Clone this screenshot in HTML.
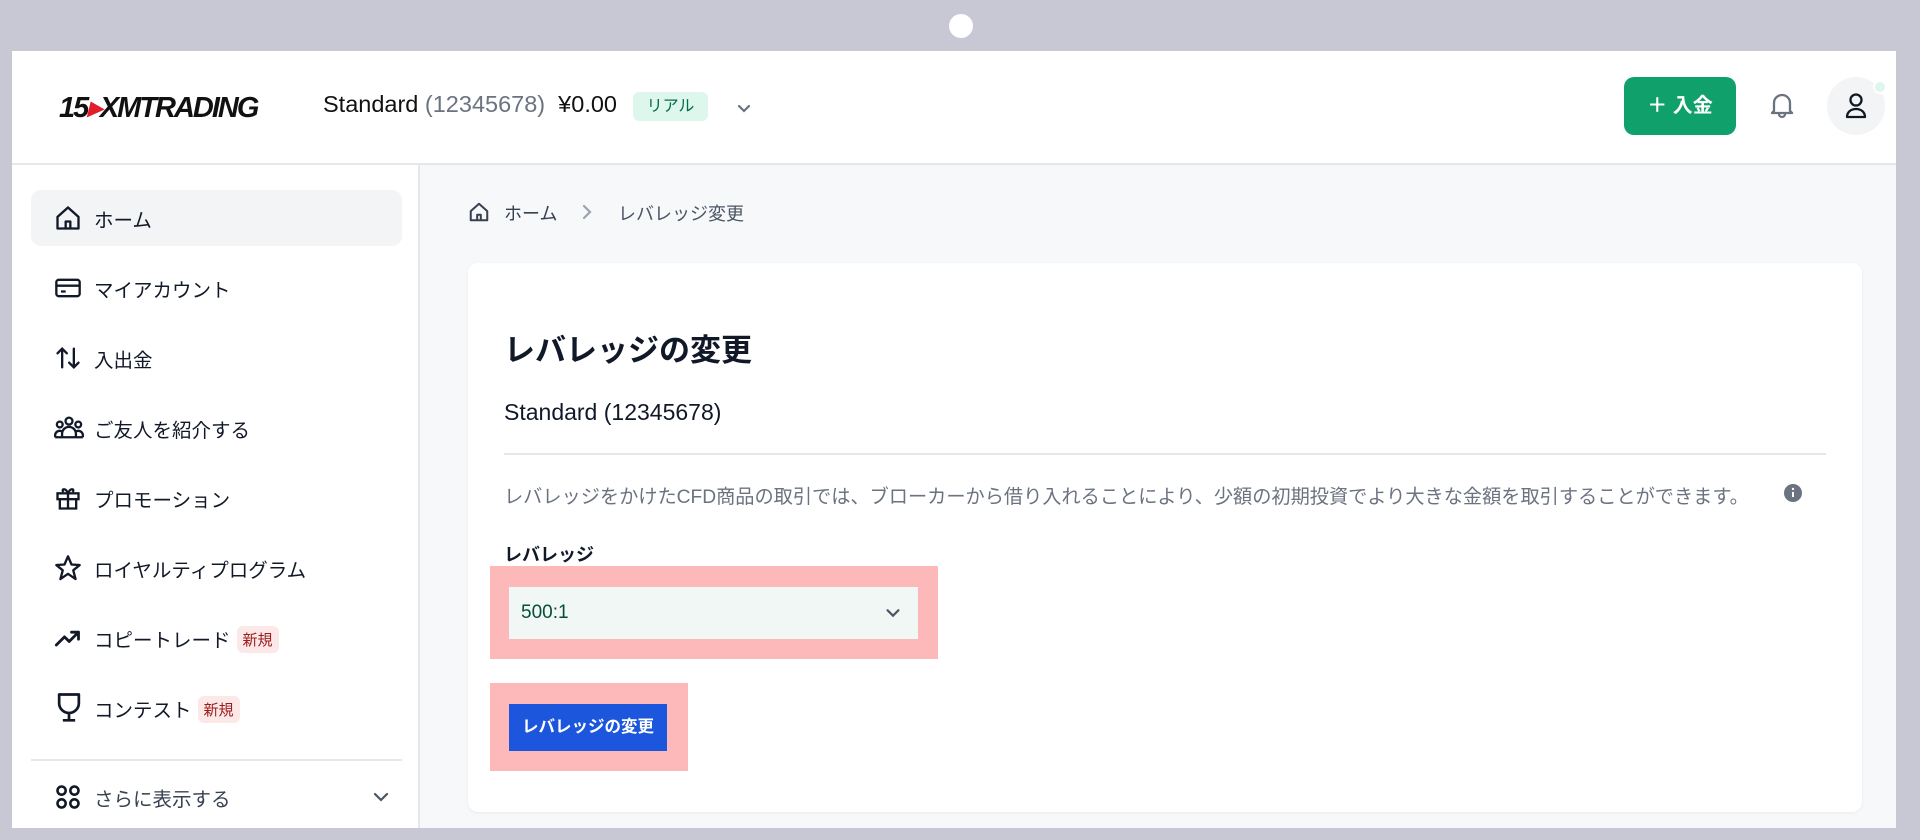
<!DOCTYPE html>
<html><head><meta charset="utf-8">
<style>
*{box-sizing:border-box;margin:0;padding:0}
body{width:1920px;height:840px;background:#c8c8d4;font-family:"Liberation Sans","Noto Sans CJK JP",sans-serif;position:relative;overflow:hidden;color:#111827}
.dot{position:absolute;left:949px;top:14px;width:24px;height:24px;border-radius:50%;background:#fff}
.screen{position:absolute;left:12px;top:51px;width:1884px;height:777px;background:#f7f8fa;overflow:hidden}
.header{position:absolute;left:0;top:0;width:1884px;height:114px;background:#fff;border-bottom:2px solid #e5e7eb}
.side{position:absolute;left:0;top:114px;width:408px;height:663px;background:#fff;border-right:2px solid #e5e7eb}
.item{position:absolute;left:19px;width:371px;height:56px;display:flex;align-items:center;font-size:19.5px;color:#111827}
.item svg{position:absolute;left:23px;top:50%;transform:translateY(-50%)}
.item span.t{position:absolute;left:63px}
.new{display:inline-block;background:#fde8e8;color:#9b1c1c;font-size:15px;padding:3px 6px;border-radius:6px;margin-left:6px;vertical-align:2px}
.card{position:absolute;left:456px;top:212px;width:1394px;height:549px;background:#fff;border-radius:10px;box-shadow:0 1px 3px rgba(0,0,0,.06)}
</style></head><body>
<div class="dot"></div>
<div class="screen">
 <div class="header">
  <div style="position:absolute;left:47px;top:39px;font-weight:bold;font-style:italic;font-size:29px;letter-spacing:-2px;color:#111">15<span style="color:#e11d2a">▸</span>XMTRADING</div>
  <div style="position:absolute;left:311px;top:40px;font-size:23.5px;color:#111">Standard <span style="color:#6b7280">(12345678)</span>&nbsp; ¥0.00</div>
  <div style="position:absolute;left:621px;top:41px;width:75px;height:29px;background:#def7ec;border-radius:6px;color:#046c4e;font-size:16px;text-align:center;line-height:29px">リアル</div>
  <svg style="position:absolute;left:722px;top:47px" width="20" height="20" viewBox="0 0 20 20"><path d="M5 8l5 5 5-5" fill="none" stroke="#6b7280" stroke-width="2.2" stroke-linecap="round"/></svg>
  <div style="position:absolute;left:1612px;top:26px;width:112px;height:58px;background:#10a06c;border-radius:10px;color:#fff;font-size:20px;font-weight:bold;text-align:center;line-height:58px">＋ 入金</div>
  <svg style="position:absolute;left:1756px;top:38px" width="28" height="32" viewBox="0 0 28 32"><path d="M6 22V14a8 8 0 0116 0v8l2 2H4z M11 25a3 3 0 006 0" fill="none" stroke="#6b7280" stroke-width="2.3" stroke-linejoin="round"/></svg>
  <div style="position:absolute;left:1815px;top:26px;width:58px;height:58px;background:#f3f4f6;border-radius:50%"></div>
  <div style="position:absolute;left:1861px;top:29px;width:14px;height:14px;background:#def7ec;border-radius:50%;border:2px solid #fff"></div>
  <svg style="position:absolute;left:1830px;top:40px" width="28" height="30" viewBox="0 0 28 30"><circle cx="14" cy="9" r="5.5" fill="none" stroke="#111827" stroke-width="2.3"/><path d="M5 26c0-5 4-8 9-8s9 3 9 8z" fill="none" stroke="#111827" stroke-width="2.3" stroke-linejoin="round"/></svg>
 </div>
 <div class="side">
  <div class="item" style="top:25px;background:#f3f4f6;border-radius:10px"><svg width="28" height="28" viewBox="0 0 24 24"><path d="M3 11l9-8 9 8v10H3z M10 21v-6h4v6" fill="none" stroke="#111827" stroke-width="2" stroke-linejoin="round"/></svg><span class="t">ホーム</span></div>
  <div class="item" style="top:95px"><svg width="28" height="28" viewBox="0 0 24 24"><rect x="2" y="5" width="20" height="14" rx="2" fill="none" stroke="#111827" stroke-width="2"/><path d="M2 10h20M6 15h4" stroke="#111827" stroke-width="2"/></svg><span class="t">マイアカウント</span></div>
  <div class="item" style="top:165px"><svg width="28" height="28" viewBox="0 0 24 24"><path d="M7 20V4M3 8l4-4 4 4M17 4v16M13 16l4 4 4-4" fill="none" stroke="#111827" stroke-width="2" stroke-linecap="round"/></svg><span class="t">入出金</span></div>
  <div class="item" style="top:235px"><svg width="30" height="28" viewBox="0 0 26 24"><circle cx="13" cy="6" r="3" fill="none" stroke="#111827" stroke-width="2"/><circle cx="5" cy="9" r="2.5" fill="none" stroke="#111827" stroke-width="2"/><circle cx="21" cy="9" r="2.5" fill="none" stroke="#111827" stroke-width="2"/><path d="M7 20v-3a6 6 0 0112 0v3zM1 20v-2a4 4 0 016-3M25 20v-2a4 4 0 00-6-3M1 20h24" fill="none" stroke="#111827" stroke-width="2"/></svg><span class="t">ご友人を紹介する</span></div>
  <div class="item" style="top:305px"><svg width="28" height="28" viewBox="0 0 24 24"><rect x="3" y="8" width="18" height="5" fill="none" stroke="#111827" stroke-width="2"/><path d="M5 13v8h14v-8M12 8v13M12 8C10 3 6 4 8 7M12 8c2-5 6-4 4-1" fill="none" stroke="#111827" stroke-width="2"/></svg><span class="t">プロモーション</span></div>
  <div class="item" style="top:375px"><svg width="28" height="28" viewBox="0 0 24 24"><path d="M12 2l3 7 7 .5-5.5 4.5 2 7.5L12 17l-6.5 4.5 2-7.5L2 9.5 9 9z" fill="none" stroke="#111827" stroke-width="2" stroke-linejoin="round"/></svg><span class="t">ロイヤルティプログラム</span></div>
  <div class="item" style="top:445px"><svg width="28" height="28" viewBox="0 0 24 24"><path d="M2 18l7-7 4 4 8-8M15 7h6v6" fill="none" stroke="#111827" stroke-width="2.4" stroke-linecap="round" stroke-linejoin="round"/></svg><span class="t">コピートレード<span class="new">新規</span></span></div>
  <div class="item" style="top:515px"><svg width="30" height="32" viewBox="0 0 24 26"><path d="M4 2h16v7a8 8 0 01-16 0zM12 17v5M7 23h10" fill="none" stroke="#111827" stroke-width="2.2" stroke-linejoin="round"/></svg><span class="t">コンテスト<span class="new">新規</span></span></div>
  <div style="position:absolute;left:19px;top:594px;width:371px;height:2px;background:#e5e7eb"></div>
  <div class="item" style="top:604px"><svg width="28" height="28" viewBox="0 0 24 24"><g fill="none" stroke="#111827" stroke-width="2.2"><rect x="3" y="3" width="7" height="7" rx="3.5"/><rect x="14" y="3" width="7" height="7" rx="3.5"/><rect x="3" y="14" width="7" height="7" rx="3.5"/><rect x="14" y="14" width="7" height="7" rx="3.5"/></g></svg><span class="t" style="color:#374151">さらに表示する</span>
   <svg style="position:absolute;left:340px" width="20" height="20" viewBox="0 0 20 20"><path d="M4 7l6 6 6-6" fill="none" stroke="#4b5563" stroke-width="2.2" stroke-linecap="round"/></svg></div>
 </div>
 <svg style="position:absolute;left:456px;top:150px" width="22" height="22" viewBox="0 0 24 24"><path d="M3 11l9-8 9 8v10H3z M10 21v-6h4v6" fill="none" stroke="#374151" stroke-width="2.2" stroke-linejoin="round"/></svg>
 <div style="position:absolute;left:492px;top:149px;font-size:18px;color:#374151">ホーム</div>
 <svg style="position:absolute;left:565px;top:151px" width="20" height="20" viewBox="0 0 20 20"><path d="M7 4l6 6-6 6" fill="none" stroke="#9ca3af" stroke-width="2.2" stroke-linecap="round"/></svg>
 <div style="position:absolute;left:606px;top:149px;font-size:18px;color:#4b5563">レバレッジ変更</div>
 <div class="card">
  <div style="position:absolute;left:36px;top:62px;font-size:31px;font-weight:bold;color:#111827">レバレッジの変更</div>
  <div style="position:absolute;left:36px;top:136px;font-size:23px;color:#111827">Standard (12345678)</div>
  <div style="position:absolute;left:36px;top:190px;width:1322px;height:2px;background:#e5e7eb"></div>
  <div style="position:absolute;left:36px;top:218px;font-size:19.2px;color:#6b7280;white-space:nowrap">レバレッジをかけたCFD商品の取引では、ブローカーから借り入れることにより、少額の初期投資でより大きな金額を取引することができます。</div>
  <svg style="position:absolute;left:1315px;top:220px" width="20" height="20" viewBox="0 0 20 20"><circle cx="10" cy="10" r="9" fill="#6b7280"/><path d="M10 9v5" stroke="#fff" stroke-width="2"/><circle cx="10" cy="6" r="1.2" fill="#fff"/></svg>
  <div style="position:absolute;left:36px;top:278px;font-size:18px;font-weight:bold;color:#111827">レバレッジ</div>
  <div style="position:absolute;left:22px;top:303px;width:448px;height:93px;background:#fdb9b9"></div>
  <div style="position:absolute;left:41px;top:324px;width:409px;height:52px;background:#f1f7f4"></div>
  <div style="position:absolute;left:53px;top:339px;font-size:19px;color:#064e3b">500:1</div>
  <svg style="position:absolute;left:416px;top:341px" width="18" height="18" viewBox="0 0 20 20"><path d="M4 7l6 6 6-6" fill="none" stroke="#4b5563" stroke-width="2.4" stroke-linecap="round"/></svg>
  <div style="position:absolute;left:22px;top:420px;width:198px;height:88px;background:#fdb9b9"></div>
  <div style="position:absolute;left:41px;top:441px;width:158px;height:47px;background:#1c56dd;color:#fff;font-size:16.5px;font-weight:bold;text-align:center;line-height:47px">レバレッジの変更</div>
 </div>
</div>
</body></html>
